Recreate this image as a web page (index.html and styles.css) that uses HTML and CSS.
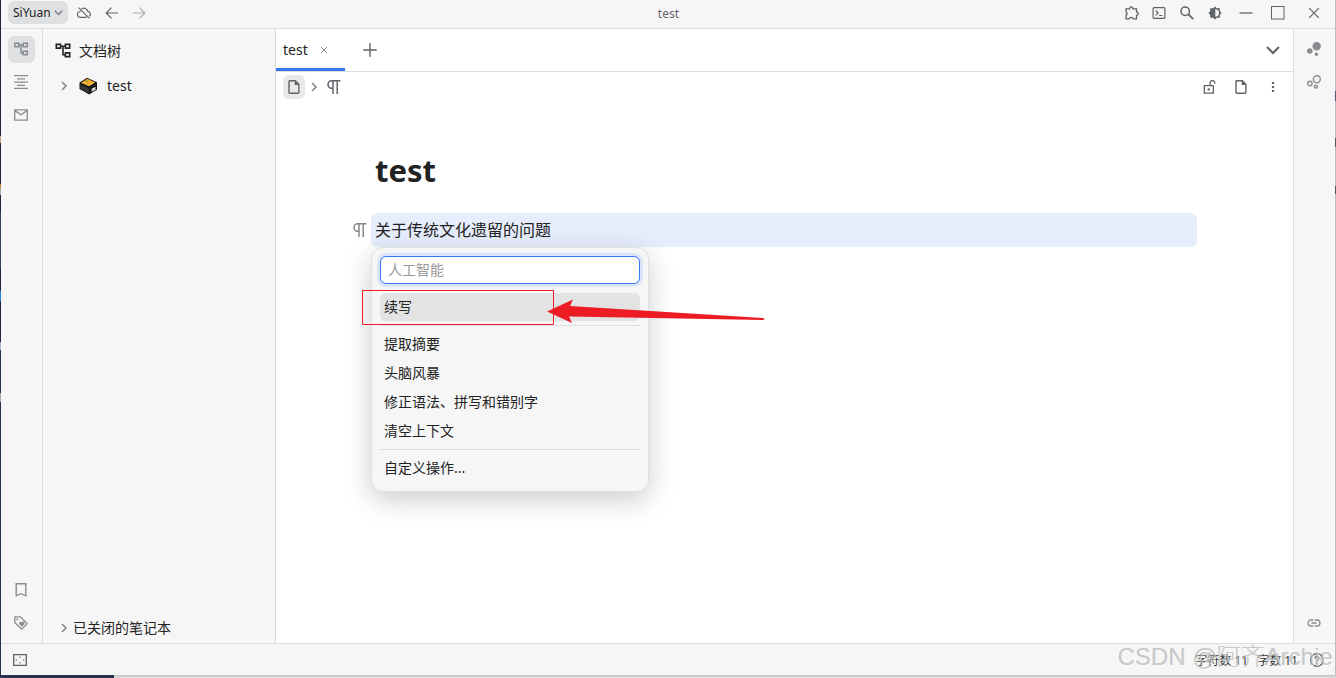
FILE: index.html
```html
<!DOCTYPE html>
<html lang="zh-CN">
<head>
<meta charset="utf-8">
<title>test</title>
<link rel="stylesheet" href="styles.css">
</head>
<body>
<svg class="defs" aria-hidden="true">
  <symbol id="tree" viewBox="0 0 14 14"><path d="M.75 1.25h4v3.5h-4zM9.25 1.25h4v3.5h-4zM9.25 9.25h4v3.5h-4zM4.75 3h4.5M7 3v8h2.25" fill="none" stroke="currentColor" stroke-width="1.5"/></symbol>
  <symbol id="right" viewBox="0 0 8 10"><path d="M2 1l4 4-4 4" fill="none" stroke="currentColor" stroke-width="1.6"/></symbol>
  <symbol id="file" viewBox="0 0 14 14"><path d="M2.6.8h5.7l3.6 3.6v7.8q0 1-1 1H3q-1 0-1-1V1.6z" fill="none" stroke="currentColor" stroke-width="1.4"/><path d="M7.7.8v4.1h4.2z" fill="currentColor"/></symbol>
  <symbol id="para" viewBox="0 0 14 14"><path d="M13.5.8H4.7a3.7 3.7 0 0 0 0 7.4H6M6 1v13M10.2 1v13" fill="none" stroke="currentColor" stroke-width="1.5"/></symbol>
</svg>
<div class="app">
  <header class="toolbar">
    <button class="workspace">SiYuan <svg width="9" height="6" viewBox="0 0 9 6"><path d="M.8.8l3.7 3.7L8.2.8" fill="none" stroke="#7b7f83" stroke-width="1.4"/></svg></button>
    <span class="tool"><svg width="14" height="12" viewBox="0 0 14 12"><path d="M4.5 2A4 4 0 0 1 10.8 4.3 3 3 0 0 1 12.5 9.4M9.5 10.3H3.6A2.9 2.9 0 0 1 3 4.5l.7-.5M1.7.7l10.6 10.6" fill="none" stroke="currentColor" stroke-width="1.2"/></svg></span>
    <span class="tool"><svg width="14" height="12" viewBox="0 0 14 12"><path d="M13 6H1.2M6.5.7L1.2 6l5.3 5.3" fill="none" stroke="currentColor" stroke-width="1.2"/></svg></span>
    <span class="tool disabled"><svg width="14" height="12" viewBox="0 0 14 12"><path d="M1 6h11.8M7.5.7L12.8 6l-5.3 5.3" fill="none" stroke="currentColor" stroke-width="1.2"/></svg></span>
    <div class="window-title">test</div>
    <span class="tool"><svg width="14" height="14" viewBox="0 0 14 14"><path d="M1 2.8h3.7V2.3a1.5 1.5 0 0 1 3 0v.5h3.8v3.4h.3a1.5 1.5 0 0 1 0 3h-.3v3.6H8.1a2 2 0 0 0-3.8 0H1V9.4a2 2 0 0 0 0-3.5z" fill="none" stroke="currentColor" stroke-width="1.3"/></svg></span>
    <span class="tool"><svg width="14" height="14" viewBox="0 0 14 14"><rect x="1.1" y="1.6" width="11.8" height="10.8" rx="1" fill="none" stroke="currentColor" stroke-width="1.2"/><path d="M3.7 4.5L6.1 7 3.7 9.4M7 9.5h3.3" fill="none" stroke="currentColor" stroke-width="1.2"/></svg></span>
    <span class="tool"><svg width="14" height="14" viewBox="0 0 14 14"><circle cx="5.2" cy="5.2" r="4.2" fill="none" stroke="currentColor" stroke-width="1.5"/><path d="M8.2 8.2l5 5" stroke="currentColor" stroke-width="1.7"/></svg></span>
    <span class="tool"><svg width="14" height="14" viewBox="0 0 14 14"><path d="M7 .5L8.9 2.2h2.9v2.9L13.5 7l-1.7 1.9v2.9H8.9L7 13.5l-1.9-1.7H2.2V8.9L.5 7l1.7-1.9V2.2h2.9z" fill="currentColor"/><path d="M7.3 3.3a3.7 3.7 0 0 1 0 7.4z" fill="#f5f5f5"/></svg></span>
    <span class="tool minimize"><svg width="14" height="14" viewBox="0 0 14 14"><path d="M.5 7h13" stroke="currentColor" stroke-width="1.3"/></svg></span>
    <span class="tool maximize"><svg width="14" height="14" viewBox="0 0 14 14"><rect x=".5" y=".5" width="12.5" height="12.5" fill="none" stroke="currentColor"/></svg></span>
    <span class="tool close"><svg width="12" height="12" viewBox="0 0 12 12"><path d="M1.2 1.2l9.6 9.6m0-9.6l-9.6 9.6" stroke="currentColor" stroke-width="1.2"/></svg></span>
  </header>
  <main class="layout">
    <nav class="dock dock-left">
      <span class="dock-item active"><svg width="14" height="14"><use href="#tree"/></svg></span>
      <span class="dock-item"><svg width="14" height="14" viewBox="0 0 14 14"><path d="M0 .7h14M3 3.9h8M0 7.1h14M3 10.3h8M0 13.4h14" stroke="currentColor" stroke-width="1.2"/></svg></span>
      <span class="dock-item"><svg width="14" height="14" viewBox="0 0 14 14"><path d="M.7 1.9h12.6v10.3H.7zM.9 2.6L7 6.7l6.1-4.1" fill="none" stroke="currentColor" stroke-width="1.3"/></svg></span>
      <span class="spacer"></span>
      <span class="dock-item"><svg width="14" height="14" viewBox="0 0 14 14"><path d="M2.2.8h9.6v12L7 10.7l-4.8 2.1z" fill="none" stroke="currentColor" stroke-width="1.4"/></svg></span>
      <span class="dock-item"><svg width="14" height="14" viewBox="0 0 14 14"><path d="M.8.9h5.7l6.7 6.7-5.5 5.5L.8 6.4z" fill="none" stroke="currentColor" stroke-width="1.3"/><circle cx="3.3" cy="3.3" r="1" fill="currentColor"/><path d="M8 10.8L5.2 8a1.5 1.5 0 0 1 2.5-1.6A1.5 1.5 0 0 1 10.5 8z" fill="currentColor"/></svg></span>
    </nav>
    <aside class="files">
      <div class="files-head"><svg width="16" height="15"><use href="#tree"/></svg>文档树</div>
      <div class="notebook"><svg class="arrow" width="8" height="10"><use href="#right"/></svg>
        <svg class="box" width="19" height="18" viewBox="0 0 19 18"><path d="M.5 5.5L8 .7l10 4.5v7.5l-7.8 4.8L.5 12z" fill="#191919"/><path d="M2 5.7L8.2 1.8l8 3.5-6.3 4z" fill="#eaa52b"/><path d="M4 5.7l4.1-2.2 2.2 1-3.6 2.6zM9.5 7.6l4-2.3 1.4.6-4.3 2.6z" fill="#ffc64a"/><path d="M7 3.3l2.3 1-1.5 1.1-2-.9z" fill="#7d9737"/><path d="M1.4 7.5l8.3 4.1v4.6l-8.3-4.7z" fill="#363636"/><path d="M12.7 11.7l3.8-2v3l-3.8 2.1z" fill="#ddd"/></svg>test</div>
      <span class="spacer"></span>
      <div class="closed-books"><svg class="arrow" width="8" height="10"><use href="#right"/></svg>已关闭的笔记本</div>
    </aside>
    <section class="center">
      <div class="tabs">
        <div class="tab">test<svg width="8" height="8" viewBox="0 0 8 8"><path d="M1 1l6 6m0-6L1 7" stroke="#85898d"/></svg></div>
        <svg class="add" width="14" height="14" viewBox="0 0 14 14"><path d="M7 .3v13.4M.3 7h13.4" stroke="currentColor" stroke-width="1.4"/></svg>
        <span class="spacer"></span>
        <svg width="14" height="9" viewBox="0 0 14 9"><path d="M1 1l6 6 6-6" fill="none" stroke="currentColor" stroke-width="2"/></svg>
      </div>
      <div class="breadcrumb">
        <span class="crumb"><svg width="14" height="14"><use href="#file"/></svg></span>
        <svg class="arrow" width="8" height="10"><use href="#right"/></svg>
        <svg class="crumb-para" width="14" height="14"><use href="#para"/></svg>
        <span class="spacer"></span>
        <span class="doc-action"><svg width="13" height="14" viewBox="0 0 13 14"><path d="M1.3 5.7h9v7.5h-9zM7 5.5V3a2.4 2.4 0 0 1 4.8 0v.7" fill="none" stroke="currentColor" stroke-width="1.3"/><circle cx="5.8" cy="9.4" r="1.2" fill="currentColor"/></svg></span>
        <span class="doc-action"><svg width="14" height="14"><use href="#file"/></svg></span>
        <span class="doc-action"><svg width="4" height="12" viewBox="0 0 4 12"><path d="M.9 1h2.2v2H.9zM.9 5h2.2v2H.9zM.9 9h2.2v2H.9z" fill="currentColor"/></svg></span>
      </div>
      <article class="document">
        <h1>test</h1>
        <div class="block"><svg class="gutter" width="14" height="14"><use href="#para"/></svg><p>关于传统文化遗留的问题</p>
          <div class="menu">
            <input placeholder="人工智能">
            <div class="menu-item current">续写</div>
            <hr>
            <div class="menu-item">提取摘要</div>
            <div class="menu-item">头脑风暴</div>
            <div class="menu-item">修正语法、拼写和错别字</div>
            <div class="menu-item">清空上下文</div>
            <hr>
            <div class="menu-item">自定义操作...</div>
          </div>
        </div>
      </article>
    </section>
    <nav class="dock dock-right">
      <span class="dock-item"><svg width="14" height="14" viewBox="0 0 14 14"><circle cx="9.7" cy="4.2" r="4.2" fill="currentColor"/><circle cx="2.8" cy="9" r="2.8" fill="currentColor"/><circle cx="9.4" cy="12.2" r="1.7" fill="currentColor"/></svg></span>
      <span class="dock-item"><svg width="14" height="14" viewBox="0 0 14 14"><g fill="none" stroke="currentColor" stroke-width="1.4"><circle cx="9.8" cy="4.2" r="3.5"/><circle cx="2.9" cy="8.5" r="2.2"/><circle cx="8.8" cy="11.6" r="1.5"/></g></svg></span>
      <span class="spacer"></span>
      <span class="dock-item"><svg width="14" height="8" viewBox="0 0 14 8"><path d="M6.3 1H4a3 3 0 0 0 0 6h2.3M7.7 1H10a3 3 0 0 1 0 6H7.7M4.4 4h5.2" fill="none" stroke="currentColor" stroke-width="1.3"/></svg></span>
    </nav>
  </main>
  <footer class="status">
    <svg width="14" height="12" viewBox="0 0 14 12"><path d="M.7.7h12.6v10.6H.7z" fill="none" stroke="currentColor" stroke-width="1.3"/><path d="M7 2.2l1.2 1.2H5.8zM7 9.8l1.2-1.2H5.8zM2.4 6l1.2-1.2v2.4zM11.6 6l-1.2-1.2v2.4z" fill="currentColor"/></svg>
    <span class="spacer"></span>
    <span class="count">字符数 11</span><span class="count words">字数 11</span>
    <svg class="help" width="14" height="14" viewBox="0 0 14 14"><circle cx="7" cy="7" r="6.3" fill="none" stroke="currentColor" stroke-width="1.2"/><path d="M5 5.5a2 2 0 1 1 2.6 1.8q-.6.3-.6 1.4M7 9.9v1.4" fill="none" stroke="currentColor" stroke-width="1.2"/></svg>
  </footer>
</div>
<svg class="annotation" width="404" height="40" viewBox="0 0 404 40"><path d="M.5 1.5h191v34H.5z" fill="none" stroke="#ed1c24"/><path d="M185 22.5l26-12-3 6.5 193 12q3 1 0 2l-194-3.5 3 6.5z" fill="#ed1c24"/></svg>
<div class="watermark">CSDN @阿齐Archie</div>
</body>
</html>
```
FILE: styles.css
```css
* { box-sizing: border-box; }
body {
  margin: 0;
  width: 1336px;
  height: 678px;
  overflow: hidden;
  position: relative;
  padding: 0 1px 3px;
  color: #222;
  font: 14px/20px "Noto Sans", "Noto Sans CJK SC", sans-serif;
  background:
    linear-gradient(#26344c, #26344c) 0 675px / 114px 3px no-repeat,
    linear-gradient(#c2c2c2, #e0e0e0) 114px 675px / 1222px 3px no-repeat,
    linear-gradient(#1d293b 0 136px, #c9a48c 136px 143px, #1d293b 143px 184px, #b78b3d 184px 189px, #a7b0bf 189px 195px, #1d293b 195px 212px, #35435e 212px 269px, #1d293b 269px 291px, #2d84df 291px 301px, #1d293b 301px 342px, #aab7cb 342px 350px, #26344c 350px 393px, #aaa 393px 402px, #26344c 402px) 0 0 / 1px 675px no-repeat,
    linear-gradient(#bbb 0 91px, #557 91px 101px, #bbb 101px 138px, #555 138px 147px, #bbb 147px 186px, #555 186px 194px, #bbb 194px) 1335px 0 / 1px 675px no-repeat;
}
svg { display: block; flex: none; }
.defs { position: absolute; width: 0; height: 0; }
.spacer { flex: 1; }
.app { height: 675px; display: flex; flex-direction: column; background: #f6f6f6; }
.toolbar {
  height: 29px;
  border-bottom: 1px solid #dedede;
  display: flex;
  padding: 0 0 3px 7px;
  align-items: center;
  color: #5f6368;
}
.workspace {
  width: 60px;
  height: 23px;
  border: 0;
  border-radius: 6px;
  padding: 0 0 0 5px;
  background: #dee0e1;
  color: #222;
  font: 12px/20px "Noto Sans", sans-serif;
  display: flex;
  align-items: center;
  gap: 3px;
  margin-right: 2px;
}
.tool { width: 27.7px; display: flex; justify-content: center; }
.disabled { color: #a9abad; }
.window-title { flex: 1; text-align: center; font-size: 12px; padding: 3px 0 0 66px; }
.minimize { width: 34px; }
.maximize { width: 30.5px; }
.close { width: 42px; }
.layout { height: 614px; display: flex; }
.dock { display: flex; flex-direction: column; gap: 6px; padding: 7px 7px 6px; color: #898c90; }
.dock-left { width: 42px; border-right: 1px solid #dedede; }
.dock-right { width: 42px; border-left: 1px solid #dedede; }
.dock-item { width: 27px; height: 27px; border-radius: 6px; display: flex; align-items: center; justify-content: flex-start; padding: 0 0 1px 6px; }
.active { background: #dee0e1; }
.files { width: 233px; border-right: 1px solid #dedede; display: flex; flex-direction: column; }
.files-head { height: 43px; padding-left: 12px; display: flex; align-items: center; gap: 8px; }
.files-head svg { margin-bottom: 1px; }
.notebook { height: 28px; padding-left: 17px; display: flex; align-items: center; }
.box { margin: 0 9px 0 11px; }
.arrow { color: #85898d; }
.closed-books { height: 30px; padding-left: 17px; display: flex; align-items: center; gap: 5px; }
.center { flex: 1; background: #fff; display: flex; flex-direction: column; color: #5f6368; }
.tabs { height: 43px; border-bottom: 1px solid #dedede; display: flex; align-items: center; padding-right: 13px; }
.tab {
  width: 69px;
  height: 42px;
  padding: 3px 0 0 7px;
  border-bottom: 3px solid #3575f0;
  display: flex;
  align-items: center;
  gap: 12px;
  color: #222;
}
.add { margin-left: 18px; }
.breadcrumb { height: 30px; display: flex; align-items: center; padding: 0 4px 0 7px; }
.crumb { width: 22px; height: 24px; border-radius: 6px; background: #e9e9e9; display: flex; align-items: center; justify-content: center; margin-right: 5px; }
.crumb-para { margin-left: 9px; }
.doc-action { width: 32px; display: flex; justify-content: center; }
.document { padding: 43px 96px 0 95px; color: #222; }
h1 { margin: 0 0 18px 4px; font-size: 31px; line-height: 50px; font-weight: 700; }
.block { position: relative; height: 34px; border-radius: 6px; background: #e6edfc; }
p { margin: 0; padding: 0 4px; font-size: 16px; line-height: 34px; }
.gutter { position: absolute; left: -18px; top: 10px; color: #85898d; }
.menu {
  position: absolute;
  left: 0;
  top: 34px;
  width: 278px;
  height: 245px;
  padding: 8px;
  border: 1px solid #e0e0e0;
  border-radius: 12px;
  background: #f6f6f6;
  box-shadow: 0 8px 28px rgba(0, 0, 0, .2);
}
.menu input {
  display: block;
  width: 260px;
  height: 28px;
  margin: 0 0 9px;
  padding: 0 7px 2px;
  border: 1px solid #3575f0;
  border-radius: 6px;
  outline: 0;
  box-shadow: 0 0 0 3px #dce5f7;
  background: #fff;
  font: inherit;
}
.menu input::placeholder { color: #999; }
.menu-item { height: 28px; line-height: 28px; padding: 0 4px; border-radius: 6px; margin-bottom: 1px; }
.current { background: #e3e3e3; }
hr { border: 0; height: 1px; background: #dedede; margin: 4px 0; }
.status { height: 32px; border-top: 1px solid #dedede; padding: 0 11px 0 12px; display: flex; align-items: center; color: #5f6368; }
.count { font-size: 12px; line-height: 20px; color: #333; margin: 2px 9px 0 0; }
.words { margin-right: 12px; }
.annotation { position: absolute; left: 362px; top: 289px; }
.watermark {
  position: absolute;
  left: 1118px;
  top: 641px;
  font: 24px/32px "Liberation Sans", "Noto Sans CJK SC", sans-serif;
  font-weight: 300;
  white-space: nowrap;
  color: rgba(205, 205, 205, .5);
  text-shadow: -.5px -.5px 0 rgba(120, 120, 120, .4), 1px 1px 0 rgba(255, 255, 255, .4);
}
```
